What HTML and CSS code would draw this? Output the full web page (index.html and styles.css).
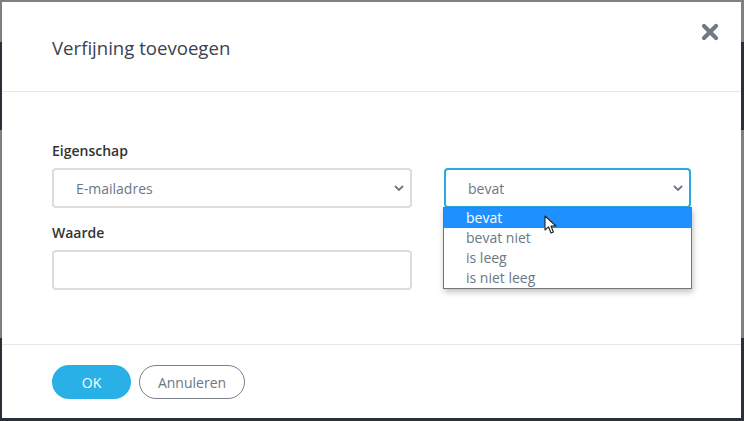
FILE: index.html
```html
<!DOCTYPE html>
<html lang="nl">
<head>
    <meta charset="UTF-8">
    <title>Verfijning toevoegen</title>
    <link rel="stylesheet" href="styles.css">
</head>
<body>
    <div class="modal">
        <div class="modal-header">
            <h2>Verfijning toevoegen</h2>
            <button class="close" aria-label="Sluiten">
                <svg width="18" height="18" viewBox="0 0 18 18">
                    <path d="M3 3 L15 15 M15 3 L3 15" stroke="#6f7a86" stroke-width="4.2" stroke-linecap="round"/>
                </svg>
            </button>
        </div>
        <div class="modal-body">
            <div class="form-grid">
                <div class="field">
                    <label>Eigenschap</label>
                    <div class="select">
                        <span>E-mailadres</span>
                        <svg class="chevron" width="10" height="6" viewBox="0 0 10 6">
                            <path d="M1 1 L5 5 L9 1" fill="none" stroke="#6b7785" stroke-width="1.8"/>
                        </svg>
                    </div>
                </div>
                <div class="field">
                    <label>&nbsp;</label>
                    <div class="select focused">
                        <span>bevat</span>
                        <svg class="chevron" width="10" height="6" viewBox="0 0 10 6">
                            <path d="M1 1 L5 5 L9 1" fill="none" stroke="#6b7785" stroke-width="1.8"/>
                        </svg>
                        <ul class="options">
                            <li class="active">bevat</li>
                            <li>bevat niet</li>
                            <li>is leeg</li>
                            <li>is niet leeg</li>
                        </ul>
                        <svg class="pointer" width="14" height="20" viewBox="0 0 14 20">
                            <path d="M1 1 L1 15 L4.5 11.8 L7 18 L9.4 17 L7 11 L12 11 Z" fill="#fff" stroke="#222" stroke-width="1.1" stroke-linejoin="round"/>
                        </svg>
                    </div>
                </div>
                <div class="field">
                    <label>Waarde</label>
                    <input type="text" class="input">
                </div>
            </div>
        </div>
        <div class="modal-footer">
            <button class="btn btn-primary">OK</button>
            <button class="btn btn-outline">Annuleren</button>
        </div>
    </div>
</body>
</html>
```

FILE: styles.css
```css
body {
    margin: 0;
    height: 421px;
    overflow: hidden;
    font-family: 'Open Sans', 'Liberation Sans', sans-serif;
    background: linear-gradient(to bottom, #808080 0 42px, #2b3038 42px 130px, #808080 130px 338px, #2b3038 338px);
}
.modal {
    margin: 2px 3px 0 2px;
    height: 416px;
    background: #fff;
    display: flex;
    flex-direction: column;
}
.modal-header {
    height: 89px;
    border-bottom: 1px solid #e6e6e6;
    display: flex;
    justify-content: space-between;
    align-items: flex-start;
    padding: 0 22px 0 50px;
}
.modal-header h2 {
    margin: 34px 0 0;
    font-size: 18.6px;
    font-weight: 400;
    color: #3a434e;
    line-height: 24px;
}
.close {
    margin-top: 21px;
    padding: 0;
    border: 0;
    background: none;
    width: 18px;
    height: 18px;
}
.modal-body {
    flex-grow: 1;
    padding: 49px 50px 0;
    border-bottom: 1px solid #e6e6e6;
}
.form-grid {
    display: grid;
    grid-template-columns: 360px 247px;
    column-gap: 32px;
    row-gap: 15px;
}
.field label {
    display: block;
    font-size: 14px;
    font-weight: 600;
    color: #333;
    line-height: 19px;
    margin-bottom: 8px;
}
.select, .input {
    box-sizing: border-box;
    height: 40px;
    border: 2px solid #dcdcdc;
    border-radius: 4px;
    background: #fff;
}
.select {
    position: relative;
    display: flex;
    align-items: center;
    justify-content: space-between;
    padding: 0 4px 0 22px;
    font-size: 14px;
    color: #6b7785;
}
.select .chevron {
    margin-right: 2px;
}
.select.focused {
    border-color: #29abe2;
}
.input {
    display: block;
    width: 100%;
    font: inherit;
}
.options {
    position: absolute;
    top: 37px;
    left: -3px;
    right: -3px;
    margin: 0;
    padding: 0;
    list-style: none;
    background: #fff;
    border: 1px solid #767676;
    box-shadow: 1px 3px 6px rgba(0,0,0,0.25);
    z-index: 2;
}
.options li {
    height: 20px;
    line-height: 20px;
    padding-left: 22px;
    font-size: 14px;
    color: #6b7785;
}
.options li.active {
    background: #1e90ff;
    color: #fff;
}
.pointer {
    position: absolute;
    left: 98px;
    top: 45px;
    z-index: 3;
}
.modal-footer {
    box-sizing: border-box;
    height: 73px;
    padding: 20px 50px 0;
    display: flex;
    gap: 8px;
    align-items: flex-start;
}
.btn {
    height: 34px;
    border-radius: 17px;
    font-family: inherit;
    font-size: 14px;
    cursor: pointer;
}
.btn-primary {
    width: 79px;
    border: 0;
    background: #29b0e6;
    color: #fff;
}
.btn-outline {
    width: 106px;
    background: #fff;
    border: 1px solid #7a8088;
    color: #6b7785;
}
```
